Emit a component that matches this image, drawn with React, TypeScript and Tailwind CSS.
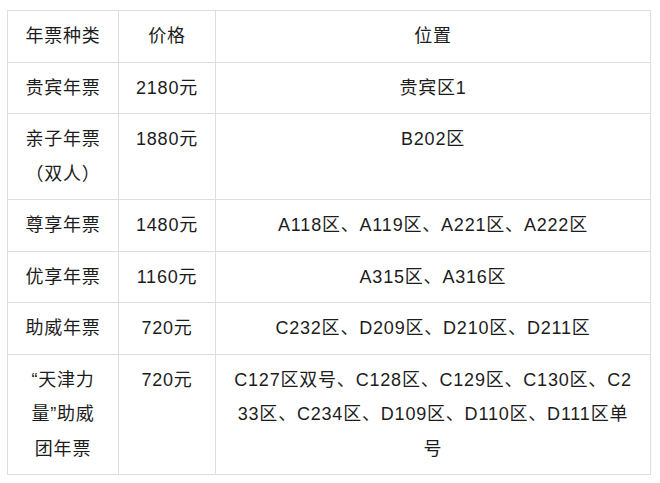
const rows: { type: string; price: string; place: string }[] = [
  { type: "贵宾年票", price: "2180元", place: "贵宾区1" },
  { type: "亲子年票（双人）", price: "1880元", place: "B202区" },
  { type: "尊享年票", price: "1480元", place: "A118区、A119区、A221区、A222区" },
  { type: "优享年票", price: "1160元", place: "A315区、A316区" },
  { type: "助威年票", price: "720元", place: "C232区、D209区、D210区、D211区" },
  {
    type: "“天津力量”助威团年票",
    price: "720元",
    place: "C127区双号、C128区、C129区、C130区、C233区、C234区、D109区、D110区、D111区单号",
  },
];

export default function App() {
  return (
    <div
      className="w-[660px] h-[483px] bg-white pt-[10px] pl-[7px]"
      style={{ fontFamily: '"Liberation Sans", "Noto Sans CJK SC", sans-serif' }}
    >
      <table className="border-collapse table-fixed w-[644px] text-[18px] leading-[34.5px] text-[#1c1c1c] tracking-[0.8px]">
        <colgroup>
          <col className="w-[111px]" />
          <col className="w-[97px]" />
          <col />
        </colgroup>
        <thead>
          <tr>
            <th className="border border-[#dedede] px-4 py-2 font-normal align-top text-center">年票种类</th>
            <th className="border border-[#dedede] px-4 py-2 font-normal align-top text-center">价格</th>
            <th className="border border-[#dedede] px-4 py-2 font-normal align-top text-center">位置</th>
          </tr>
        </thead>
        <tbody>
          {rows.map((r) => (
            <tr key={r.type}>
              <td className="border border-[#dedede] px-4 py-2 align-top text-center break-all">{r.type}</td>
              <td className="border border-[#dedede] px-4 py-2 align-top text-center">{r.price}</td>
              <td className="border border-[#dedede] px-4 py-2 align-top text-center break-all">{r.place}</td>
            </tr>
          ))}
        </tbody>
      </table>
    </div>
  );
}
